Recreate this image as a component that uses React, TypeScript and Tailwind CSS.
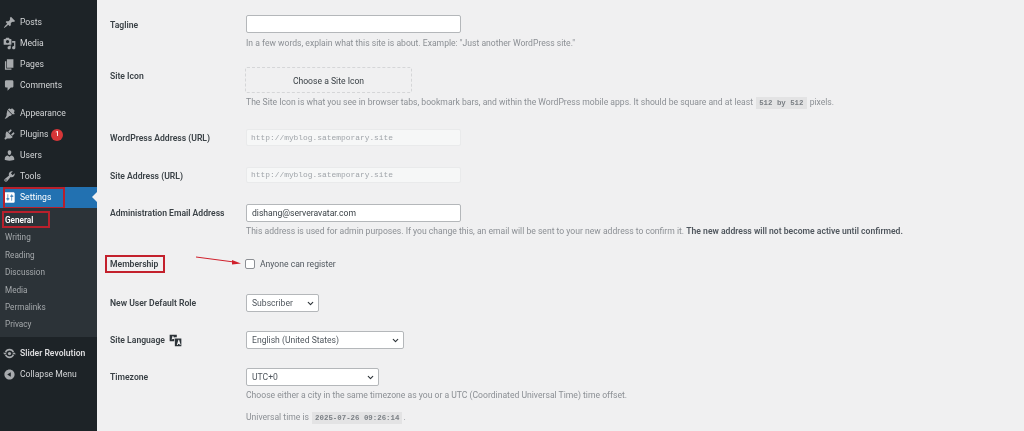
import React from "react";
import { ChevronDown } from "lucide-react";

// dashicons don't ship in any package, so the menu glyphs are drawn here
const Dash = ({ d, className = "text-[#a7aaad]" }: { d: string; className?: string }) => (
  <svg viewBox="0 0 20 20" className={`w-[13px] h-[13px] ${className}`} fill="currentColor" fillRule="evenodd">
    <path d={d} />
  </svg>
);

const ICONS = {
  posts: "M10.44 3.02l1.82-1.82 6.36 6.35-1.83 1.82c-1.05-.68-2.48-.57-3.41.36l-.75.75c-.92.93-1.04 2.35-.35 3.41l-1.83 1.82-2.41-2.41-2.8 2.79c-.42.42-3.38 2.71-3.8 2.29s1.86-3.39 2.28-3.81l2.79-2.79L4.1 9.36l1.83-1.82c1.05.69 2.48.57 3.4-.36l.75-.75c.93-.92 1.05-2.35.36-3.41z",
  media: "M13 11V4c0-.55-.45-1-1-1h-1.67L9 1H5L3.67 3H2c-.55 0-1 .45-1 1v7c0 .55.45 1 1 1h10c.55 0 1-.45 1-1zM7 4.500c1.380 0 2.500 1.120 2.500 2.500S8.380 9.500 7 9.500 4.500 8.380 4.500 7 5.620 4.500 7 4.500zM14 6h5v10.500c0 1.380-1.120 2.500-2.500 2.500S14 17.880 14 16.500s1.120-2.500 2.500-2.500c.17 0 .34.020.5.050V9h-3V6zm-4 8.050V13h2v3.500c0 1.380-1.120 2.500-2.500 2.500S7 17.880 7 16.500 8.120 14 9.500 14c.17 0 .34.020.5.050z",
  pages: "M6 15V2h10v13H6zm-1 1h8v2H3V5h2v11z",
  comments: "M5 2h9c1.100 0 2 .9 2 2v7c0 1.100-.9 2-2 2h-2l-5 5v-5H5c-1.100 0-2-.9-2-2V4c0-1.100.9-2 2-2z",
  appearance: "M14.500 11L7.400 4l1.500-1.500c.5-.5 1.300-.5 1.800 0l.8.8 2-1c.5-.2 1-.1 1.400.3l2.500 2.500c.4.400.5.900.3 1.400l-1 2 .8.800c.5.500.5 1.300 0 1.800zM6.700 4.700l7.100 7.100-1.400 1.400c-1 1-2.500.5-3.500 1.400-1 1-3 3.400-6.400 3.400 1.500-1.500 2.500-3.500 3-5 .4-1.200-.5-2.400.3-3.200z",
  plugins: "M13.110 4.360L9.870 7.600 8 5.730l3.240-3.240c.35-.34 1.050-.2 1.560.32.520.51.660 1.210.31 1.550zm-8 1.770l.91-1.120 9.010 9.010-1.190.84c-.71.71-2.630 1.160-3.820 1.160H6.140L4.900 17.260c-.59.59-1.540.59-2.120 0-.59-.58-.59-1.530 0-2.120l1.240-1.240v-3.880c0-1.130.4-3.180 1.090-3.890zm7.260 3.970l3.240-3.240c.34-.35 1.040-.21 1.550.31.520.51.660 1.210.31 1.550l-3.240 3.250z",
  users: "M10 9.250c-2.270 0-2.730-3.440-2.730-3.440C7 4.020 7.820 2 9.970 2c2.160 0 2.980 2.020 2.710 3.810 0 0-.41 3.440-2.680 3.440zm0 2.570L12.720 10c2.390 0 4.520 2.330 4.520 4.530v2.490s-3.650 1.130-7.240 1.130c-3.650 0-7.240-1.130-7.240-1.130v-2.490c0-2.250 1.940-4.480 4.470-4.480z",
  tools: "M16.680 9.770c-1.340 1.340-3.300 1.670-4.950.99l-5.410 6.520c-.99.990-2.590.990-3.570 0-.990-.980-.990-2.580 0-3.570l6.520-5.420c-.68-1.650-.35-3.610.99-4.950 1.280-1.280 3.120-1.620 4.720-1.060l-2.890 2.890 2.820 2.820 2.860-2.870c.53 1.580.18 3.440-1.090 4.670zM3.810 16.210c.400.390 1.030.390 1.420 0 .400-.400.400-1.030 0-1.420-.390-.400-1.020-.400-1.420 0-.390.390-.390 1.020 0 1.420z",
  settings: "M18 16V4c0-1.100-.9-2-2-2H4c-1.100 0-2 .9-2 2v12c0 1.100.9 2 2 2h12c1.100 0 2-.9 2-2zM8 11h1c.55 0 1 .45 1 1s-.45 1-1 1H8v1.500c0 .28-.22.5-.5.5s-.5-.22-.5-.5V13H6c-.55 0-1-.45-1-1s.45-1 1-1h1V5.500c0-.28.22-.5.5-.5s.5.22.5.5V11zm5-2h-1c-.55 0-1-.45-1-1s.45-1 1-1h1V5.500c0-.28.22-.5.5-.5s.5.22.5.5V7h1c.55 0 1 .45 1 1s-.45 1-1 1h-1v5.500c0 .28-.22.5-.5.5s-.5-.22-.5-.5V9z",
  collapse: "M10 2.160c4.330 0 7.840 3.510 7.840 7.840s-3.510 7.840-7.840 7.840S2.160 14.330 2.160 10 5.710 2.160 10 2.160zm2 11.340V6.500L6.500 10z",
  translate: "M1 1h11v4H8v6H1zm3 7.500h1l.4-1h2.200L8 6.500 6.500 3h-1zM9 7h10v12H9zm3 10h1.500l.5-1.500h2l.5 1.500H18l-2.500-8h-1z",
};

const SliderIcon = () => (
  <svg viewBox="0 0 20 20" className="w-[13px] h-[13px] text-[#a7aaad]" fill="none" stroke="currentColor" strokeWidth="2.500">
    <path d="M4 8a6.500 6.500 0 0 1 12 0M16 12a6.500 6.500 0 0 1-12 0" />
    <circle cx="10" cy="10" r="2.500" fill="currentColor" stroke="none" />
    <path d="M0 9h6L3 12zM14 11h6l-3-3z" fill="currentColor" stroke="none" />
  </svg>
);

const MenuItem = ({ icon, label, className = "" }: { icon: React.ReactNode; label: string; className?: string }) => (
  <div className={`flex items-center h-[21px] text-[#d3d5d7] ${className}`}>
    <span className="w-[20px] pl-[3px] flex items-center">{icon}</span>
    <span>{label}</span>
  </div>
);

const SubItem = ({ label, active = false }: { label: string; active?: boolean }) => (
  <div className={`h-[17.4px] leading-[17.4px] pl-[5px] ${active ? "text-white font-semibold" : "text-[#a4a8ab]"}`}>
    {label}
  </div>
);

const Label = ({ children, className = "" }: { children: React.ReactNode; className?: string }) => (
  <div className={`w-[136px] shrink-0 pt-[1px] font-semibold text-[#3a4146] flex items-center gap-[4px] ${className}`}>
    {children}
  </div>
);

const TextBox = ({ value = "", className = "" }: { value?: string; className?: string }) => (
  <div className={`w-[215px] h-[18px] bg-white border border-[#b4b7ba] rounded-[2px] px-[5px] leading-[16px] text-[#3a4146] ${className}`}>
    {value}
  </div>
);

const ReadOnly = ({ value, className = "" }: { value: string; className?: string }) => (
  <div className={`w-[215px] bg-[#f6f7f7] rounded-[2px] border border-[#e9eaeb] px-[4px] font-['Liberation_Mono',monospace] text-[7.900px] text-[#a0a5aa] flex items-center ${className}`}>
    {value}
  </div>
);

const Select = ({ value, className = "" }: { value: string; className?: string }) => (
  <div className={`h-[18px] bg-white border border-[#b4b7ba] rounded-[2px] pl-[5px] pr-[3px] flex items-center justify-between text-[#50575e] ${className}`}>
    <span>{value}</span>
    <ChevronDown className="w-[9px] h-[9px] text-[#2c3338]" strokeWidth={3} />
  </div>
);

const Help = ({ children, className = "" }: { children: React.ReactNode; className?: string }) => (
  <p className={`h-[12px] leading-[12px] text-[#8b8f94] whitespace-nowrap ${className}`}>{children}</p>
);

const Code = ({ children }: { children: React.ReactNode }) => (
  <code className="bg-[#e3e3e4] px-[3px] py-[2px] font-['Liberation_Mono',monospace] text-[7.400px] font-bold text-[#7a7f84] mx-[1px]">
    {children}
  </code>
);

export default function App() {
  return (
    <div className="flex w-[1024px] h-[431px] overflow-hidden bg-[#f0f0f1] font-['Roboto',sans-serif] text-[8.600px] blur-[0.5px]">
      <nav className="relative w-[97px] shrink-0 bg-[#1d2327] pt-[12px]">
        <MenuItem icon={<Dash d={ICONS.posts} />} label="Posts" />
        <MenuItem icon={<Dash d={ICONS.media} />} label="Media" />
        <MenuItem icon={<Dash d={ICONS.pages} />} label="Pages" />
        <MenuItem icon={<Dash d={ICONS.comments} />} label="Comments" />
        <MenuItem icon={<Dash d={ICONS.appearance} />} label="Appearance" className="mt-[7px]" />
        <div className="flex items-center h-[21px] text-[#d3d5d7]">
          <span className="w-[20px] pl-[3px] flex items-center"><Dash d={ICONS.plugins} /></span>
          <span>Plugins</span>
          <span className="ml-[3px] w-[12px] h-[12px] rounded-full bg-[#d63638] text-white text-[7px] font-semibold flex items-center justify-center">1</span>
        </div>
        <MenuItem icon={<Dash d={ICONS.users} />} label="Users" />
        <MenuItem icon={<Dash d={ICONS.tools} />} label="Tools" />
        <div className="relative flex items-center h-[21px] bg-[#2271b1] text-white">
          <span className="w-[20px] pl-[3px] flex items-center"><Dash d={ICONS.settings} className="text-white" /></span>
          <span>Settings</span>
          <span className="absolute right-0 top-[5px] border-y-[5px] border-r-[5px] border-y-transparent border-r-[#f0f0f1]" />
          <span className="absolute left-[3px] top-0 w-[62px] h-[22px] border-2 border-[#b8202c]" />
        </div>
        <div className="relative bg-[#2c3338] pt-[4px] pb-[3px] text-[8.200px]">
          <SubItem label="General" active />
          <SubItem label="Writing" />
          <SubItem label="Reading" />
          <SubItem label="Discussion" />
          <SubItem label="Media" />
          <SubItem label="Permalinks" />
          <SubItem label="Privacy" />
          <span className="absolute left-[2px] top-[3px] w-[48px] h-[17px] border-2 border-[#b8202c]" />
        </div>
        <MenuItem icon={<SliderIcon />} label="Slider Revolution" className="mt-[6px] font-semibold text-[#dcdcde]" />
        <MenuItem icon={<Dash d={ICONS.collapse} />} label="Collapse Menu" className="text-[#a7aaad]" />
      </nav>

      <main className="relative flex-1 pl-[13px] pt-[15px] text-[#50575e]">
        <div className="flex">
          <Label className="h-[18px] pt-[2px]">Tagline</Label>
          <TextBox />
        </div>
        <Help className="ml-[136px] mt-[4px]">In a few words, explain what this site is about. Example: "Just another WordPress site."</Help>

        <div className="flex mt-[18px]">
          <Label className="h-[18px]">Site Icon</Label>
          <div className="w-[167px] h-[26px] -ml-[1px] border border-dashed border-[#d5d6d8] rounded-[2px] text-[#3a4146] flex items-center justify-center pt-[2px]">
            Choose a Site Icon
          </div>
        </div>
        <Help className="ml-[136px] mt-[3px]">
          The Site Icon is what you see in browser tabs, bookmark bars, and within the WordPress mobile apps. It should be square and at least <Code>512 by 512</Code> pixels.
        </Help>

        <div className="flex mt-[21px]">
          <Label className="h-[18px]">WordPress Address (URL)</Label>
          <ReadOnly value="http://myblog.satemporary.site" className="h-[17px]" />
        </div>

        <div className="flex mt-[20px]">
          <Label className="h-[17px]">Site Address (URL)</Label>
          <ReadOnly value="http://myblog.satemporary.site" className="h-[16px]" />
        </div>

        <div className="flex mt-[20px]">
          <Label className="h-[18px]">Administration Email Address</Label>
          <TextBox value="dishang@serveravatar.com" />
        </div>
        <Help className="ml-[136px] mt-[3px]">
          This address is used for admin purposes. If you change this, an email will be sent to your new address to confirm it. <b className="font-semibold text-[#50575e]">The new address will not become active until confirmed.</b>
        </Help>

        <div className="flex mt-[19px] h-[16px] items-center">
          <Label>
            <span className="relative">
              Membership
              <span className="absolute -left-[5px] -top-[3px] w-[60px] h-[18px] border-2 border-[#c3202c]" />
            </span>
          </Label>
          <span className="-ml-[1px] w-[10px] h-[10px] bg-white border border-[#8c8f94] rounded-[2px]" />
          <span className="ml-[5px]">Anyone can register</span>
        </div>

        <div className="flex mt-[22px]">
          <Label className="h-[18px]">New User Default Role</Label>
          <Select value="Subscriber" className="w-[73px]" />
        </div>

        <div className="flex mt-[19px]">
          <Label className="h-[18px]">Site Language <Dash d={ICONS.translate} className="text-[#2c3338]" /></Label>
          <Select value="English (United States)" className="w-[158px]" />
        </div>

        <div className="flex mt-[19px]">
          <Label className="h-[18px]">Timezone</Label>
          <Select value="UTC+0" className="w-[133px]" />
        </div>
        <Help className="ml-[136px] mt-[3px]">Choose either a city in the same timezone as you or a UTC (Coordinated Universal Time) time offset.</Help>
        <Help className="ml-[136px] mt-[10px]">Universal time is <Code>2025-07-26 09:26:14</Code>.</Help>

        {/* annotation arrow */}
        <svg className="absolute left-[99px] top-[254px] w-[48px] h-[12px]" viewBox="0 0 48 12">
          <path d="M0 3 L38 8" stroke="#d0202c" strokeWidth="1" />
          <path d="M45 9.500 L36 6 L36 10.500z" fill="#d0202c" />
        </svg>
      </main>
    </div>
  );
}
